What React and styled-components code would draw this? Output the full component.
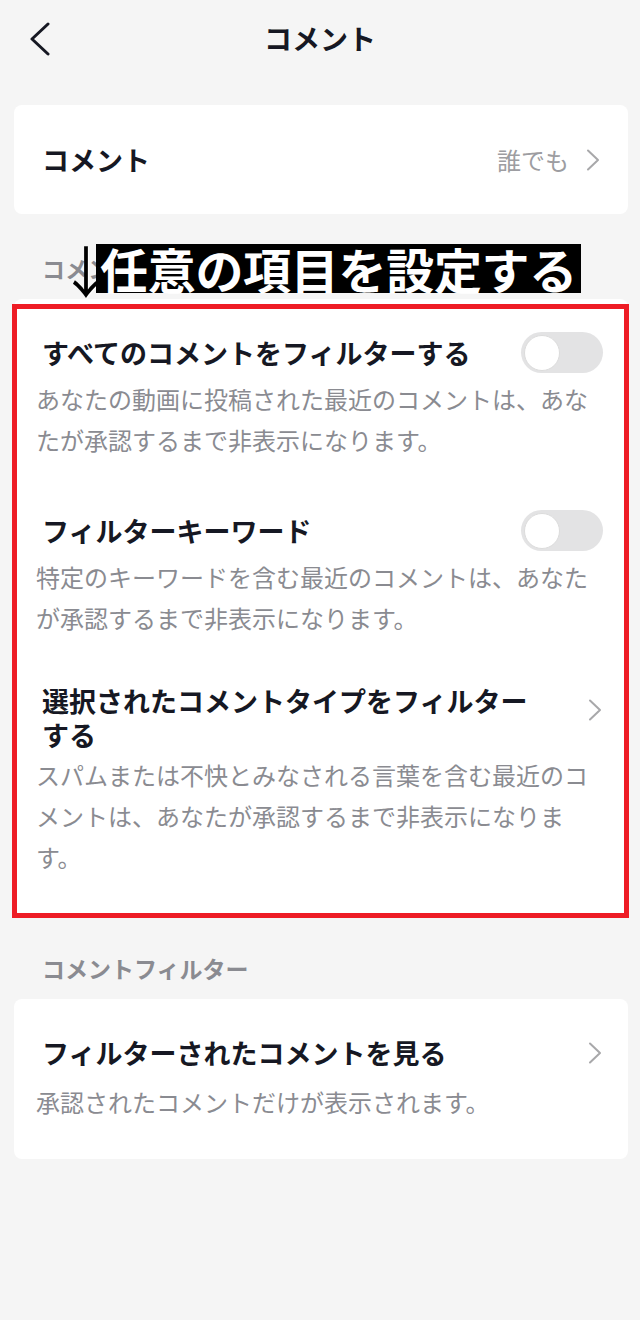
import React from 'react';
import styled, { createGlobalStyle } from 'styled-components';

const GlobalStyle = createGlobalStyle`
  html, body {
    margin: 0;
    padding: 0;
    background: #f5f5f5;
  }
  body {
    font-family: "Noto Sans CJK JP", "Noto Sans", sans-serif;
    color: #161823;
  }
`;

const Page = styled.div`
  position: relative;
  width: 640px;
  min-height: 1320px;
  background: #f5f5f5;
  padding-bottom: 40px;
  box-sizing: border-box;
`;

const Header = styled.header`
  position: relative;
  height: 76px;
  display: flex;
  align-items: center;
  justify-content: center;
`;

const BackButton = styled.button`
  position: absolute;
  left: 26px;
  top: 19px;
  width: 28px;
  height: 40px;
  padding: 0;
  border: none;
  background: none;
  display: flex;
  align-items: center;
  justify-content: center;
`;

const HeaderTitle = styled.h1`
  margin: 0;
  font-size: 28px;
  font-weight: 700;
  line-height: 76px;
  color: #161823;
`;

const Card = styled.section`
  position: relative;
  margin: ${(p) => p.$top || 0}px 12px 0 14px;
  background: #ffffff;
  border-radius: 8px;
  box-sizing: border-box;
  padding: 33px 25px 37px 22px;
  display: flex;
  flex-direction: column;
`;

const LinkCard = styled.section`
  margin: ${(p) => p.$top || 0}px 12px 0 14px;
  height: 109px;
  background: #ffffff;
  border-radius: 8px;
  box-sizing: border-box;
  padding: 0 27px 0 28px;
  display: flex;
  align-items: center;
`;

const Highlight = styled.div`
  position: absolute;
  top: 5px;
  left: -2px;
  right: -1px;
  bottom: -4px;
  border: 5px solid #ee1c25;
  pointer-events: none;
`;

const Row = styled.div`
  display: flex;
  flex-direction: column;
  margin-top: ${(p) => p.$space || 0}px;
`;

const TitleRow = styled.div`
  display: flex;
  align-items: center;
  min-height: 41px;
`;

const Title = styled.div`
  flex: 1;
  padding-left: 6px;
  padding-right: ${(p) => (p.$narrow ? '46px' : '0')};
  font-size: 27px;
  font-weight: 700;
  line-height: 34px;
  color: #161823;
`;

const PlainTitle = styled.div`
  flex: 1;
  font-size: 27px;
  font-weight: 700;
  color: #161823;
`;

const Value = styled.span`
  font-size: 24px;
  color: #9d9da1;
  margin-right: 16px;
`;

const Description = styled.p`
  margin: ${(p) => p.$gap}px 0 0;
  font-size: 24px;
  line-height: 41px;
  color: #8a8b91;
`;

const Toggle = styled.div`
  position: relative;
  flex: none;
  width: 82px;
  height: 41px;
  border-radius: 21px;
  background: #e3e3e4;
`;

const Knob = styled.div`
  position: absolute;
  top: 2.5px;
  left: 2.5px;
  width: 36px;
  height: 36px;
  border-radius: 50%;
  background: #ffffff;
  box-sizing: border-box;
  border: 1px solid #dcdcdc;
`;

const ChevronBox = styled.div`
  flex: none;
  width: 16px;
  display: flex;
  justify-content: center;
  align-self: ${(p) => (p.$top ? 'flex-start' : 'center')};
  margin-top: ${(p) => (p.$top ? '15px' : '0')};
`;

const SectionLabel = styled.h2`
  margin: 39px 0 16px 42px;
  font-size: 23px;
  font-weight: 700;
  line-height: 30px;
  color: #8a8b91;
`;

const Annotation = styled.div`
  position: absolute;
  top: 244px;
  left: 58px;
  display: flex;
  align-items: center;
  gap: 2px;
`;

const Arrow = styled.span`
  font-family: "Noto Sans CJK JP", sans-serif;
  font-weight: 400;
  font-size: 56px;
  line-height: 49px;
  color: #000000;
  width: 36px;
  text-align: center;
  text-shadow: 1px 1px 0 #ffffff;
`;

const Callout = styled.span`
  background: #000000;
  color: #ffffff;
  font-size: 48px;
  font-weight: 700;
  line-height: 49px;
  padding: 0 4px 0 4px;
  letter-spacing: -0.3px;
`;

const Chevron = () => (
  <svg width="14" height="22" viewBox="0 0 14 22">
    <path d="M2 1.5 L12 11 L2 20.5" fill="none" stroke="#a8a8aa" strokeWidth="2" strokeLinecap="round" strokeLinejoin="round" />
  </svg>
);

const BackIcon = () => (
  <svg width="22" height="34" viewBox="0 0 22 34">
    <path d="M19 2 L3 17 L19 32" fill="none" stroke="#161823" strokeWidth="3" strokeLinecap="round" strokeLinejoin="round" />
  </svg>
);

const Switch = () => (
  <Toggle>
    <Knob />
  </Toggle>
);

const filters = [
  {
    title: 'すべてのコメントをフィルターする',
    desc: 'あなたの動画に投稿された最近のコメントは、あなたが承認するまで非表示になります。',
    kind: 'toggle',
    space: 0,
  },
  {
    title: 'フィルターキーワード',
    desc: '特定のキーワードを含む最近のコメントは、あなたが承認するまで非表示になります。',
    kind: 'toggle',
    space: 50,
  },
  {
    title: '選択されたコメントタイプをフィルターする',
    desc: 'スパムまたは不快とみなされる言葉を含む最近のコメントは、あなたが承認するまで非表示になります。',
    kind: 'link',
    space: 46,
  },
];

export default function App() {
  return (
    <Page>
      <GlobalStyle />
      <Header>
        <BackButton aria-label="戻る">
          <BackIcon />
        </BackButton>
        <HeaderTitle>コメント</HeaderTitle>
      </Header>

      <LinkCard $top={29}>
        <PlainTitle>コメント</PlainTitle>
        <Value>誰でも</Value>
        <ChevronBox>
          <Chevron />
        </ChevronBox>
      </LinkCard>

      <SectionLabel>コメントの管理</SectionLabel>

      <Card>
        {filters.map((f) => (
          <Row key={f.title} $space={f.space}>
            <TitleRow>
              <Title $narrow={f.kind === 'link'}>{f.title}</Title>
              {f.kind === 'toggle' ? (
                <Switch />
              ) : (
                <ChevronBox $top>
                  <Chevron />
                </ChevronBox>
              )}
            </TitleRow>
            <Description $gap={f.kind === 'link' ? 2 : 5}>{f.desc}</Description>
          </Row>
        ))}
        <Highlight />
      </Card>

      <SectionLabel>コメントフィルター</SectionLabel>

      <Card>
        <Row>
          <TitleRow>
            <Title>フィルターされたコメントを見る</Title>
            <ChevronBox>
              <Chevron />
            </ChevronBox>
          </TitleRow>
          <Description $gap={8}>承認されたコメントだけが表示されます。</Description>
        </Row>
      </Card>

      <Annotation>
        <Arrow>↓</Arrow>
        <Callout>任意の項目を設定する</Callout>
      </Annotation>
    </Page>
  );
}
